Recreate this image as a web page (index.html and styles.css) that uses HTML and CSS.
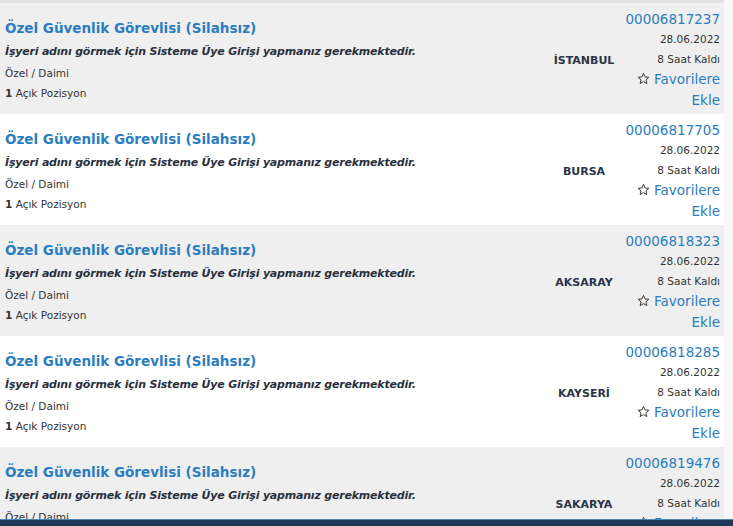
FILE: index.html
```html
<!DOCTYPE html>
<html lang="tr">
<head>
<meta charset="utf-8">
<link rel="stylesheet" href="styles.css">
</head>
<body>
<div class="topline"></div>
<div class="list">
  <div class="row gray">
    <div class="main">
      <a class="title">Özel Güvenlik Görevlisi (Silahsız)</a>
      <div class="note">İşyeri adını görmek için Sisteme Üye Girişi yapmanız gerekmektedir.</div>
      <div class="meta">Özel / Daimi</div>
      <div class="meta"><b>1</b> Açık Pozisyon</div>
    </div>
    <div class="city">İSTANBUL</div>
    <div class="side">
      <a class="id">00006817237</a>
      <div class="small">28.06.2022</div>
      <div class="small">8 Saat Kaldı</div>
      <a class="fav"><svg class="star" viewBox="0 0 24 24"><path d="M12 2.5l2.9 6.6 7.1.6-5.4 4.7 1.6 7-6.2-3.7-6.2 3.7 1.6-7L2 9.7l7.1-.6z"/></svg>Favorilere<br>Ekle</a>
    </div>
  </div>
  <div class="row">
    <div class="main">
      <a class="title">Özel Güvenlik Görevlisi (Silahsız)</a>
      <div class="note">İşyeri adını görmek için Sisteme Üye Girişi yapmanız gerekmektedir.</div>
      <div class="meta">Özel / Daimi</div>
      <div class="meta"><b>1</b> Açık Pozisyon</div>
    </div>
    <div class="city">BURSA</div>
    <div class="side">
      <a class="id">00006817705</a>
      <div class="small">28.06.2022</div>
      <div class="small">8 Saat Kaldı</div>
      <a class="fav"><svg class="star" viewBox="0 0 24 24"><path d="M12 2.5l2.9 6.6 7.1.6-5.4 4.7 1.6 7-6.2-3.7-6.2 3.7 1.6-7L2 9.7l7.1-.6z"/></svg>Favorilere<br>Ekle</a>
    </div>
  </div>
  <div class="row gray">
    <div class="main">
      <a class="title">Özel Güvenlik Görevlisi (Silahsız)</a>
      <div class="note">İşyeri adını görmek için Sisteme Üye Girişi yapmanız gerekmektedir.</div>
      <div class="meta">Özel / Daimi</div>
      <div class="meta"><b>1</b> Açık Pozisyon</div>
    </div>
    <div class="city">AKSARAY</div>
    <div class="side">
      <a class="id">00006818323</a>
      <div class="small">28.06.2022</div>
      <div class="small">8 Saat Kaldı</div>
      <a class="fav"><svg class="star" viewBox="0 0 24 24"><path d="M12 2.5l2.9 6.6 7.1.6-5.4 4.7 1.6 7-6.2-3.7-6.2 3.7 1.6-7L2 9.7l7.1-.6z"/></svg>Favorilere<br>Ekle</a>
    </div>
  </div>
  <div class="row">
    <div class="main">
      <a class="title">Özel Güvenlik Görevlisi (Silahsız)</a>
      <div class="note">İşyeri adını görmek için Sisteme Üye Girişi yapmanız gerekmektedir.</div>
      <div class="meta">Özel / Daimi</div>
      <div class="meta"><b>1</b> Açık Pozisyon</div>
    </div>
    <div class="city">KAYSERİ</div>
    <div class="side">
      <a class="id">00006818285</a>
      <div class="small">28.06.2022</div>
      <div class="small">8 Saat Kaldı</div>
      <a class="fav"><svg class="star" viewBox="0 0 24 24"><path d="M12 2.5l2.9 6.6 7.1.6-5.4 4.7 1.6 7-6.2-3.7-6.2 3.7 1.6-7L2 9.7l7.1-.6z"/></svg>Favorilere<br>Ekle</a>
    </div>
  </div>
  <div class="row gray">
    <div class="main">
      <a class="title">Özel Güvenlik Görevlisi (Silahsız)</a>
      <div class="note">İşyeri adını görmek için Sisteme Üye Girişi yapmanız gerekmektedir.</div>
      <div class="meta">Özel / Daimi</div>
      <div class="meta"><b>1</b> Açık Pozisyon</div>
    </div>
    <div class="city">SAKARYA</div>
    <div class="side">
      <a class="id">00006819476</a>
      <div class="small">28.06.2022</div>
      <div class="small">8 Saat Kaldı</div>
      <a class="fav"><svg class="star" viewBox="0 0 24 24"><path d="M12 2.5l2.9 6.6 7.1.6-5.4 4.7 1.6 7-6.2-3.7-6.2 3.7 1.6-7L2 9.7l7.1-.6z"/></svg>Favorilere<br>Ekle</a>
    </div>
  </div>
</div>
<div class="footer"></div>
</body>
</html>
```
FILE: styles.css
```css
html, body {
  margin: 0;
  padding: 0;
  background: #f8f8f8;
  font-family: "DejaVu Sans", Verdana, sans-serif;
  color: #333;
  overflow: hidden;
  height: 526px;
}
.topline {
  height: 3px;
  width: 724px;
  background: #e2e2e2;
}
.list {
  width: 724px;
}
.row {
  display: grid;
  grid-template-columns: 1fr 72px 104px;
  height: 111px;
  background: #fff;
  box-sizing: border-box;
}
.row.gray {
  background: #efefef;
}
.main {
  padding: 16px 0 0 5px;
}
.title {
  display: block;
  color: #2a7dc0;
  font-weight: bold;
  font-size: 13.5px;
  line-height: 18px;
  margin-bottom: 7px;
}
.note {
  font-weight: bold;
  font-style: italic;
  font-size: 11px;
  letter-spacing: -0.2px;
  line-height: 16px;
  color: #2a2f3d;
  margin-bottom: 3px;
}
.meta {
  font-size: 10.5px;
  line-height: 20px;
  color: #333;
}
.city {
  align-self: center;
  text-align: center;
  font-weight: bold;
  font-size: 11px;
  color: #2b3448;
  padding-top: 3px;
  white-space: nowrap;
}
.side {
  text-align: right;
  padding: 6px 4px 0 0;
  white-space: nowrap;
}
.id {
  display: block;
  color: #2a7dc0;
  font-size: 13.5px;
  line-height: 20px;
}
.small {
  font-size: 10.5px;
  line-height: 20px;
  color: #333;
}
.fav {
  display: block;
  color: #2a7dc0;
  font-size: 13.5px;
  line-height: 21px;
}
.star {
  width: 13px;
  height: 13px;
  vertical-align: -1px;
  margin-right: 4px;
  fill: none;
  stroke: #333;
  stroke-width: 1.8;
  stroke-linejoin: round;
}
.footer {
  position: fixed;
  left: 0;
  right: 0;
  bottom: 0;
  height: 6px;
  background: #1d3a5a;
  border-top: 1px solid #4a86b8;
}
```
